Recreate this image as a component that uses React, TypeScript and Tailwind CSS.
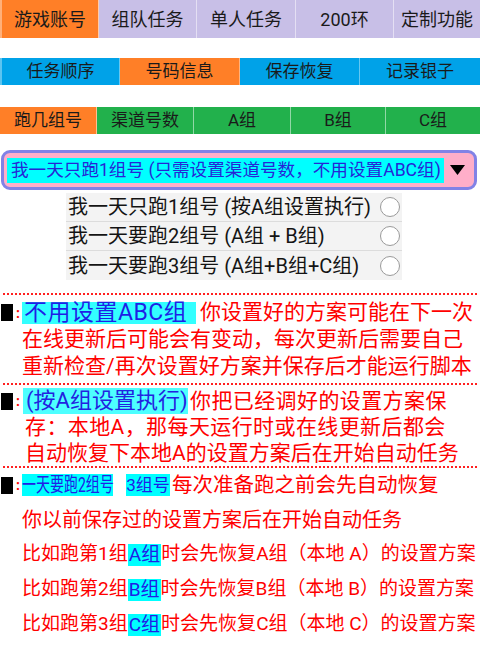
import React from "react";

const F = "font-['Roboto','Noto_Sans_CJK_SC',sans-serif]";

function Tab({ label, color, w, last }: { label: string; color: string; w: string; last?: boolean }) {
  return (
    <div
      className={`${w} ${color} h-full flex items-center justify-center ${last ? "" : "border-r"} border-white/50 text-[#1a1a1a] whitespace-nowrap`}
    >
      {label}
    </div>
  );
}

function Marker() {
  return (
    <div className="flex items-center w-[22px] shrink-0">
      <div className="w-[12px] h-[17px] bg-black ml-[1px]" />
      <span className="text-[#ff0000] text-[14px] font-bold leading-none ml-[3px]">:</span>
    </div>
  );
}

function Dots() {
  return <div className="mx-[3px] border-t-2 border-dotted border-[#ff2020]" />;
}

function Radio() {
  return <div className="w-[20px] h-[20px] rounded-full border border-[#9a9a9a] bg-white" />;
}

const ROW2 = ["任务顺序", "号码信息", "保存恢复", "记录银子"];

export default function App() {
  return (
    <div className={`w-[480px] h-[655px] bg-white overflow-hidden ${F}`}>
      {/* row 1 */}
      <div className="flex h-[38px] text-[18px]">
        <div className="w-[99px] h-full bg-[#ff7f27] border-l-2 border-[#ffb07a] border-r border-r-white/60 flex items-center justify-center text-[#1a1a1a]">
          游戏账号
        </div>
        <Tab label="组队任务" color="bg-[#c8bfe7]" w="w-[98px]" />
        <Tab label="单人任务" color="bg-[#c8bfe7]" w="w-[99px]" />
        <Tab label="200环" color="bg-[#c8bfe7]" w="w-[98px]" />
        <Tab label="定制功能" color="bg-[#c8bfe7]" w="flex-1" last />
      </div>

      {/* row 2 */}
      <div className="flex h-[27px] mt-[20px] text-[17px]">
        {ROW2.map((t, i) => (
          <div
            key={t}
            className={`w-[120px] h-full flex items-center justify-center text-[#1a1a1a] ${
              i === 1 ? "bg-[#ff7f27]" : "bg-[#00a2e8]"
            } ${i === 0 ? "border-l-2 border-l-[#5cc4f0]" : ""} ${i < 3 ? "border-r border-r-white/40" : ""}`}
          >
            {t}
          </div>
        ))}
      </div>

      {/* row 3 */}
      <div className="flex h-[27px] mt-[22px] text-[17px] text-[#1a1a1a]">
        <div className="w-[97px] h-full bg-[#ff7f27] border-r border-r-white/50 flex items-center justify-center">跑几组号</div>
        <div className="w-[97px] h-full bg-[#22b14c] border-r border-r-white/50 flex items-center justify-center">渠道号数</div>
        <div className="w-[97px] h-full bg-[#22b14c] border-r border-r-white/50 flex items-center justify-center">A组</div>
        <div className="w-[95px] h-full bg-[#22b14c] border-r border-r-white/50 flex items-center justify-center">B组</div>
        <div className="flex-1 h-full bg-[#22b14c] flex items-center justify-center">C组</div>
      </div>

      {/* dropdown */}
      <div className="mt-[16px] ml-[1px] w-[476px] h-[40px] rounded-[9px] border-[3px] border-[#8282e6] bg-[#ffaec9] flex items-center justify-between pl-[3px] pr-[9px]">
        <span className="bg-[#00ffff] text-[#2626d6] text-[17.6px] h-[25px] leading-[25px] pl-[4px] pr-[3px] whitespace-nowrap">
          我一天只跑1组号 (只需设置渠道号数，不用设置ABC组)
        </span>
        <svg width="15" height="10" viewBox="0 0 15 10">
          <polygon points="0,0 15,0 7.5,10" fill="#000" />
        </svg>
      </div>

      {/* list */}
      <div className="mt-[3px] ml-[66px] w-[336px] bg-[#f3f3f3] text-[20px] text-[#141414]">
        {[
          "我一天只跑1组号 (按A组设置执行)",
          "我一天要跑2组号 (A组 + B组)",
          "我一天要跑3组号 (A组+B组+C组)",
        ].map((t, i) => (
          <div
            key={t}
            className={`h-[29px] flex items-center justify-between pl-[2px] pr-[2px] ${i < 2 ? "border-b border-[#dcdcdc]" : ""}`}
          >
            <span className="whitespace-nowrap leading-none">{t}</span>
            <Radio />
          </div>
        ))}
      </div>

      {/* section 1 */}
      <div className="mt-[13px]">
        <Dots />
        <div className="pt-[4px] pb-[3px] text-[21px] text-[#ff0000] leading-[27px] whitespace-nowrap">
          <div className="flex items-center h-[27px]">
            <Marker />
            <span className="bg-[#33ffff] text-[#1f1fe6] text-[23px] h-[22px] leading-[22px] w-[174px] flex items-center pl-[2px] tracking-[0.5px]">
              不用设置ABC组
            </span>
            <span className="ml-[4px]">你设置好的方案可能在下一次</span>
          </div>
          <div className="pl-[22px]">在线更新后可能会有变动，每次更新后需要自己</div>
          <div className="pl-[22px]">重新检查/再次设置好方案并保存后才能运行脚本</div>
        </div>
      </div>

      {/* section 2 */}
      <div>
        <Dots />
        <div className="pt-[3px] pb-[0px] text-[21px] text-[#ff0000] leading-[26px] whitespace-nowrap">
          <div className="flex items-center h-[26px]">
            <Marker />
            <span className="ml-[1px] bg-[#4dffff] text-[#2323e0] text-[22px] h-[26px] leading-[26px] w-[165px] flex items-center pl-[3px]">
              (按A组设置执行)
            </span>
            <span className="ml-[2px] tracking-[0.4px]">你把已经调好的设置方案保</span>
          </div>
          <div className="pl-[25px] tracking-[0.4px]">存：本地A，那每天运行时或在线更新后都会</div>
          <div className="pl-[25px]">自动恢复下本地A的设置方案后在开始自动任务</div>
        </div>
      </div>

      {/* section 3 */}
      <div>
        <Dots />
        <div className="text-[19px] text-[#ff0000] whitespace-nowrap">
          <div className="flex items-center h-[34px]">
            <Marker />
            <span className="bg-[#00ffff] w-[91px] h-[22px] overflow-visible flex items-center">
              <span className="inline-block origin-left scale-x-[0.7] text-[20px] leading-none text-[#2020e6]">
                一天要跑2组号
              </span>
            </span>
            <span className="ml-[13px] bg-[#00ffff] w-[44px] h-[22px] flex items-center justify-center text-[#2020e6] text-[17px] leading-none">
              3组号
            </span>
            <span className="ml-[2px] text-[20.5px]">每次准备跑之前会先自动恢复</span>
          </div>
          <div className="pl-[22px] h-[35px] flex items-center text-[20px]">你以前保存过的设置方案后在开始自动任务</div>
          {["1", "2", "3"].map((n, i) => {
            const g = ["A", "B", "C"][i];
            return (
              <div key={n} className="pl-[22px] h-[35px] flex items-center">
                <span>比如跑第{n}组</span>
                <span className="bg-[#00ffff] text-[#2020e6] h-[22px] leading-[22px] px-[1px]">{g}组</span>
                <span>时会先恢复{g}组（本地 {g}）的设置方案</span>
              </div>
            );
          })}
        </div>
      </div>
    </div>
  );
}
